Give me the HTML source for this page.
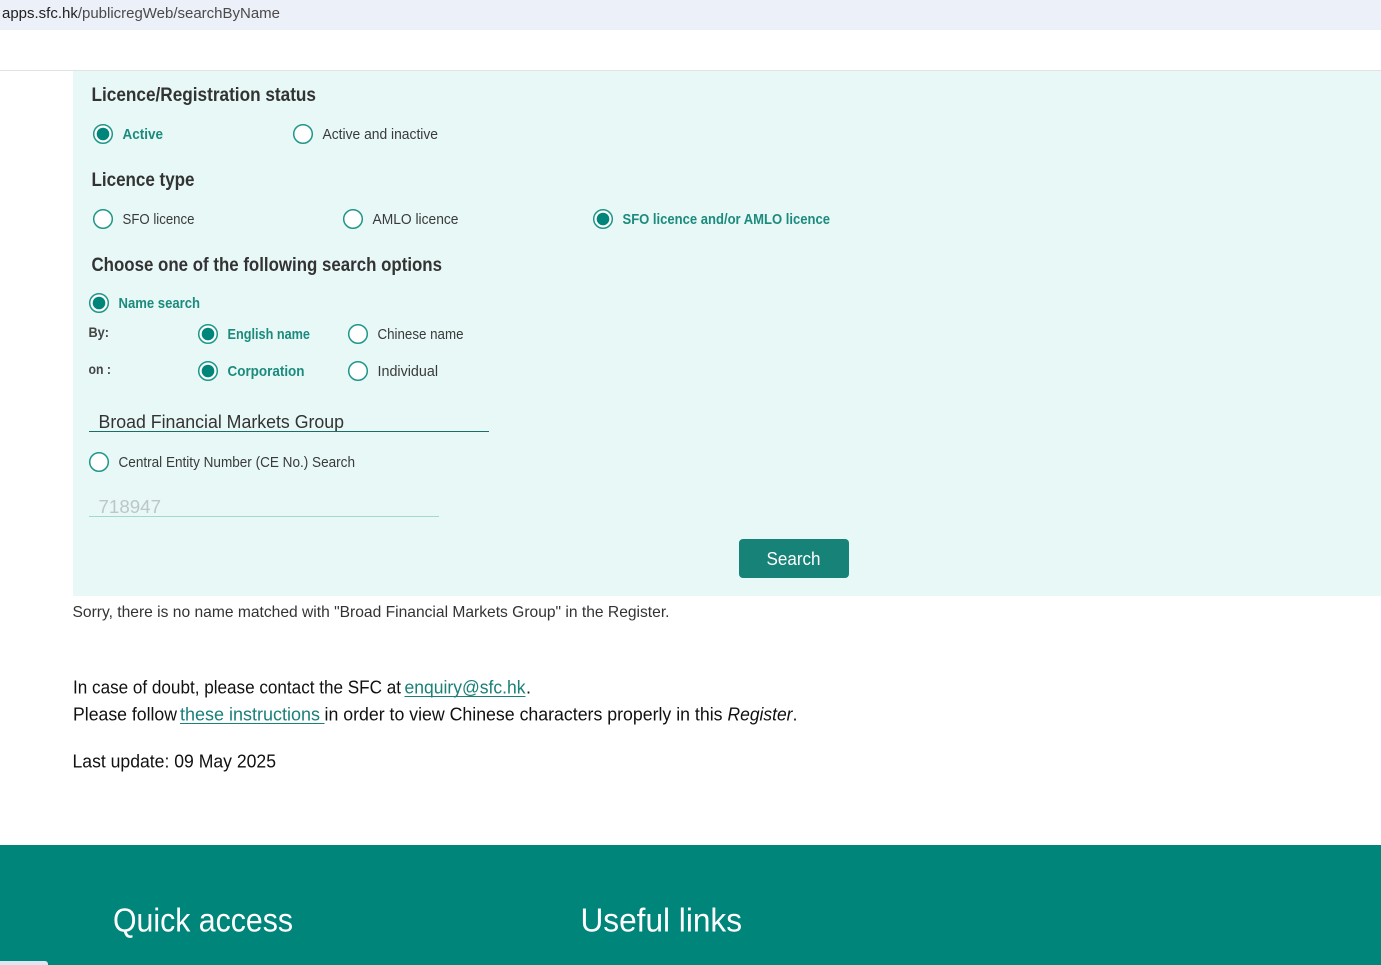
<!DOCTYPE html>
<html lang="en"><head><meta charset="utf-8"><title>SFC Public Register</title>
<style>
html,body{margin:0;padding:0;background:#fff;width:1381px;height:965px;overflow:hidden}
svg{display:block;font-family:"Liberation Sans",sans-serif}
.h{font-size:19px;font-weight:700;fill:#333}
.l{font-size:14.5px;fill:#3a3a3a}
.a{font-size:14.5px;font-weight:700;fill:#1c8a7d}
.b{font-size:14px;font-weight:700;fill:#444}
.p{font-size:18px;fill:#111}
.k{font-size:18px;fill:#1a8078}
.r{fill:#fff;stroke:#1f968a;stroke-width:1.5}
.d{fill:#00857a}
</style></head><body>
<svg width="1381" height="965" viewBox="0 0 1381 965" xmlns="http://www.w3.org/2000/svg">
<rect width="1381" height="30" fill="#ecf0f8"/>
<text x="2" y="18" font-size="15" textLength="278" lengthAdjust="spacingAndGlyphs"><tspan fill="#222">apps.sfc.hk</tspan><tspan fill="#4a4a4a">/publicregWeb/searchByName</tspan></text>
<rect y="70" width="1381" height="1" fill="#dfe3e3"/>
<rect x="73" y="71" width="1308" height="525" fill="#e7f8f6"/>

<text class="h" x="91.500" y="101" textLength="224.500" lengthAdjust="spacingAndGlyphs">Licence/Registration status</text>
<circle class="r" cx="103" cy="134" r="9.300"/><circle class="d" cx="103" cy="134" r="6.300"/>
<text class="a" x="122.500" y="139" textLength="40.500" lengthAdjust="spacingAndGlyphs">Active</text>
<circle class="r" cx="303" cy="134" r="9.300"/>
<text class="l" x="322.500" y="139" textLength="115.500" lengthAdjust="spacingAndGlyphs">Active and inactive</text>

<text class="h" x="91.500" y="186" textLength="103" lengthAdjust="spacingAndGlyphs">Licence type</text>
<circle class="r" cx="103" cy="219" r="9.300"/>
<text class="l" x="122.500" y="224" textLength="72" lengthAdjust="spacingAndGlyphs">SFO licence</text>
<circle class="r" cx="353" cy="219" r="9.300"/>
<text class="l" x="372.500" y="224" textLength="86" lengthAdjust="spacingAndGlyphs">AMLO licence</text>
<circle class="r" cx="603" cy="219" r="9.300"/><circle class="d" cx="603" cy="219" r="6.300"/>
<text class="a" x="622.500" y="224" textLength="207.500" lengthAdjust="spacingAndGlyphs">SFO licence and/or AMLO licence</text>

<text class="h" x="91.500" y="271" textLength="350.500" lengthAdjust="spacingAndGlyphs">Choose one of the following search options</text>
<circle class="r" cx="99" cy="303" r="9.300"/><circle class="d" cx="99" cy="303" r="6.300"/>
<text class="a" x="118.500" y="308" textLength="81.500" lengthAdjust="spacingAndGlyphs">Name search</text>
<text class="b" x="88.500" y="337" textLength="20.500" lengthAdjust="spacingAndGlyphs">By:</text>
<circle class="r" cx="208" cy="334" r="9.300"/><circle class="d" cx="208" cy="334" r="6.300"/>
<text class="a" x="227.500" y="339" textLength="82.500" lengthAdjust="spacingAndGlyphs">English name</text>
<circle class="r" cx="358" cy="334" r="9.300"/>
<text class="l" x="377.500" y="339" textLength="86" lengthAdjust="spacingAndGlyphs">Chinese name</text>
<text class="b" x="88.500" y="374" textLength="22.500" lengthAdjust="spacingAndGlyphs">on :</text>
<circle class="r" cx="208" cy="371" r="9.300"/><circle class="d" cx="208" cy="371" r="6.300"/>
<text class="a" x="227.500" y="376" textLength="77" lengthAdjust="spacingAndGlyphs">Corporation</text>
<circle class="r" cx="358" cy="371" r="9.300"/>
<text class="l" x="377.500" y="376" textLength="60.500" lengthAdjust="spacingAndGlyphs">Individual</text>

<text x="98.500" y="428" font-size="18.500" fill="#333" textLength="245.500" lengthAdjust="spacingAndGlyphs">Broad Financial Markets Group</text>
<rect x="89" y="431" width="400" height="1" fill="#1a6f66"/>

<circle class="r" cx="99" cy="462" r="9.300"/>
<text class="l" x="118.500" y="467" textLength="236.500" lengthAdjust="spacingAndGlyphs">Central Entity Number (CE No.) Search</text>
<text x="98.500" y="513" font-size="18.500" fill="#bcc7c6" textLength="62.500" lengthAdjust="spacingAndGlyphs">718947</text>
<rect x="89" y="516" width="350" height="1" fill="#a3d7d2"/>

<rect x="739" y="539" width="110" height="39" rx="4" fill="#178277"/>
<text x="766.500" y="565" font-size="18.500" fill="#fff" textLength="54" lengthAdjust="spacingAndGlyphs">Search</text>

<text x="72.500" y="617" font-size="16" fill="#333" textLength="597" lengthAdjust="spacingAndGlyphs">Sorry, there is no name matched with "Broad Financial Markets Group" in the Register.</text>

<text class="p" x="73" y="693.500" textLength="328" lengthAdjust="spacingAndGlyphs">In case of doubt, please contact the SFC at</text>
<text class="k" x="404.500" y="693.500" textLength="121" lengthAdjust="spacingAndGlyphs">enquiry@sfc.hk</text>
<rect x="404.500" y="696" width="121" height="1" fill="#1a8078"/>
<text class="p" x="526" y="693.500">.</text>

<text class="p" x="73" y="720.500" textLength="104" lengthAdjust="spacingAndGlyphs">Please follow</text>
<text class="k" x="180" y="720.500" textLength="140" lengthAdjust="spacingAndGlyphs">these instructions</text>
<rect x="180" y="723" width="144.500" height="1" fill="#1a8078"/>
<text class="p" x="324.500" y="720.500" textLength="398" lengthAdjust="spacingAndGlyphs">in order to view Chinese characters properly in this</text>
<text class="p" x="727.500" y="720.500" font-style="italic" textLength="65" lengthAdjust="spacingAndGlyphs">Register</text>
<text class="p" x="792.500" y="720.500">.</text>

<text class="p" x="72.500" y="767.500" textLength="203.500" lengthAdjust="spacingAndGlyphs">Last update: 09 May 2025</text>

<rect y="845" width="1381" height="120" fill="#00857a"/>
<text x="113" y="931.500" font-size="33.500" fill="#fff" textLength="180" lengthAdjust="spacingAndGlyphs">Quick access</text>
<text x="580.500" y="931.500" font-size="33.500" fill="#fff" textLength="161.500" lengthAdjust="spacingAndGlyphs">Useful links</text>
<path d="M0 965V961H45a3 3 0 0 1 3 3v1Z" fill="#dfe6f1"/>
</svg>
</body></html>
